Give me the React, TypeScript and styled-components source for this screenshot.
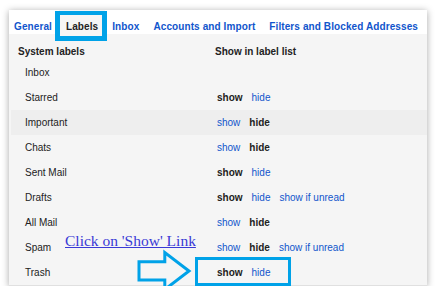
import React from 'react'
import styled, { createGlobalStyle } from 'styled-components'

const GlobalStyle = createGlobalStyle`
  html, body {
    margin: 0;
    padding: 0;
    background: #fff;
    font-family: 'Liberation Sans', Arial, sans-serif;
  }
`

const blue = '#1155cc'
const callout = '#00a2e8'
const ink = '#222'

const Page = styled.div`
  padding: 10px 8px 0 9px;
`

const Panel = styled.div`
  position: relative;
  width: 418px;
  background: #f5f5f5;
  border-bottom: 1px solid #e0e0e0;
  box-shadow: 0 1px 7px rgba(0, 0, 0, 0.35);
`

const TabBar = styled.div`
  display: flex;
  height: 24px;
  background: #fff;
`

const Tab = styled.div<{ $active?: boolean }>`
  position: relative;
  padding: 11px 7px 1px;
  font-size: 10px;
  letter-spacing: 0.1px;
  line-height: 12px;
  font-weight: 700;
  color: ${({ $active }) => ($active ? ink : blue)};
  background: ${({ $active }) => ($active ? '#f5f5f5' : 'transparent')};
  white-space: nowrap;
  &:first-child {
    padding-left: 5px;
  }
`

const TabFrame = styled.span`
  position: absolute;
  top: 1px;
  bottom: -7px;
  left: -4px;
  right: -2px;
  border: 5px solid ${callout};
  border-top-width: 4px;
`

const Header = styled.div`
  display: grid;
  grid-template-columns: 197px 1fr;
  height: 26px;
  box-sizing: border-box;
  padding: 12px 0 0 9px;
  font-size: 10px;
  line-height: 12px;
  font-weight: 700;
  color: ${ink};
`

const Row = styled.div<{ $hover?: boolean }>`
  display: grid;
  grid-template-columns: 192px 1fr;
  align-items: center;
  height: 25px;
  margin-left: 2px;
  padding-left: 14px;
  font-size: 10px;
  line-height: 12px;
  color: ${ink};
  background: ${({ $hover }) => ($hover ? '#eeeeee' : 'transparent')};
`

const Actions = styled.div`
  display: flex;
  gap: 9px;
`

const Action = styled.span<{ $on?: boolean }>`
  font-weight: ${({ $on }) => ($on ? 700 : 400)};
  color: ${({ $on }) => ($on ? ink : blue)};
  cursor: ${({ $on }) => ($on ? 'default' : 'pointer')};
`

const CalloutText = styled.span`
  position: absolute;
  left: 56px;
  top: 223px;
  font-family: 'Liberation Serif', 'Times New Roman', serif;
  font-size: 15.5px;
  line-height: 1;
  color: #3a3ad6;
  text-decoration: underline;
  white-space: nowrap;
`

const CalloutArrow = styled.svg`
  position: absolute;
  left: 127px;
  top: 239px;
`

const CalloutBox = styled.span`
  position: absolute;
  left: 186px;
  top: 247px;
  width: 96px;
  height: 29px;
  border: 3px solid ${callout};
  box-sizing: border-box;
`

type State = 'show' | 'hide' | 'none'

interface ILabel {
  name: string
  state: State
  unread?: boolean
  hover?: boolean
}

const tabs = [
  'General',
  'Labels',
  'Inbox',
  'Accounts and Import',
  'Filters and Blocked Addresses'
]

const labels: Array<ILabel> = [
  { name: 'Inbox', state: 'none' },
  { name: 'Starred', state: 'show' },
  { name: 'Important', state: 'hide', hover: true },
  { name: 'Chats', state: 'hide' },
  { name: 'Sent Mail', state: 'show' },
  { name: 'Drafts', state: 'show', unread: true },
  { name: 'All Mail', state: 'hide' },
  { name: 'Spam', state: 'hide', unread: true },
  { name: 'Trash', state: 'show' }
]

const App: React.FC = () => (
  <Page>
    <GlobalStyle />
    <Panel>
      <TabBar>
        {tabs.map(tab => (
          <Tab key={tab} $active={tab === 'Labels'}>
            {tab}
            {tab === 'Labels' && <TabFrame />}
          </Tab>
        ))}
      </TabBar>
      <Header>
        <div>System labels</div>
        <div>Show in label list</div>
      </Header>
      {labels.map(label => (
        <Row key={label.name} $hover={label.hover}>
          <div>{label.name}</div>
          {label.state !== 'none' && (
            <Actions>
              <Action $on={label.state === 'show'}>show</Action>
              <Action $on={label.state === 'hide'}>hide</Action>
              {label.unread && <Action>show if unread</Action>}
            </Actions>
          )}
        </Row>
      ))}
      <CalloutText>Click on 'Show' Link</CalloutText>
      <CalloutArrow width="58" height="45" viewBox="0 0 58 45">
        <polygon
          points="3,12.8 28.8,12.8 28.8,3.5 53,22 28.8,40.5 28.8,31 3,31"
          fill="none"
          stroke={callout}
          strokeWidth="3"
        />
      </CalloutArrow>
      <CalloutBox />
    </Panel>
  </Page>
)

export default App
